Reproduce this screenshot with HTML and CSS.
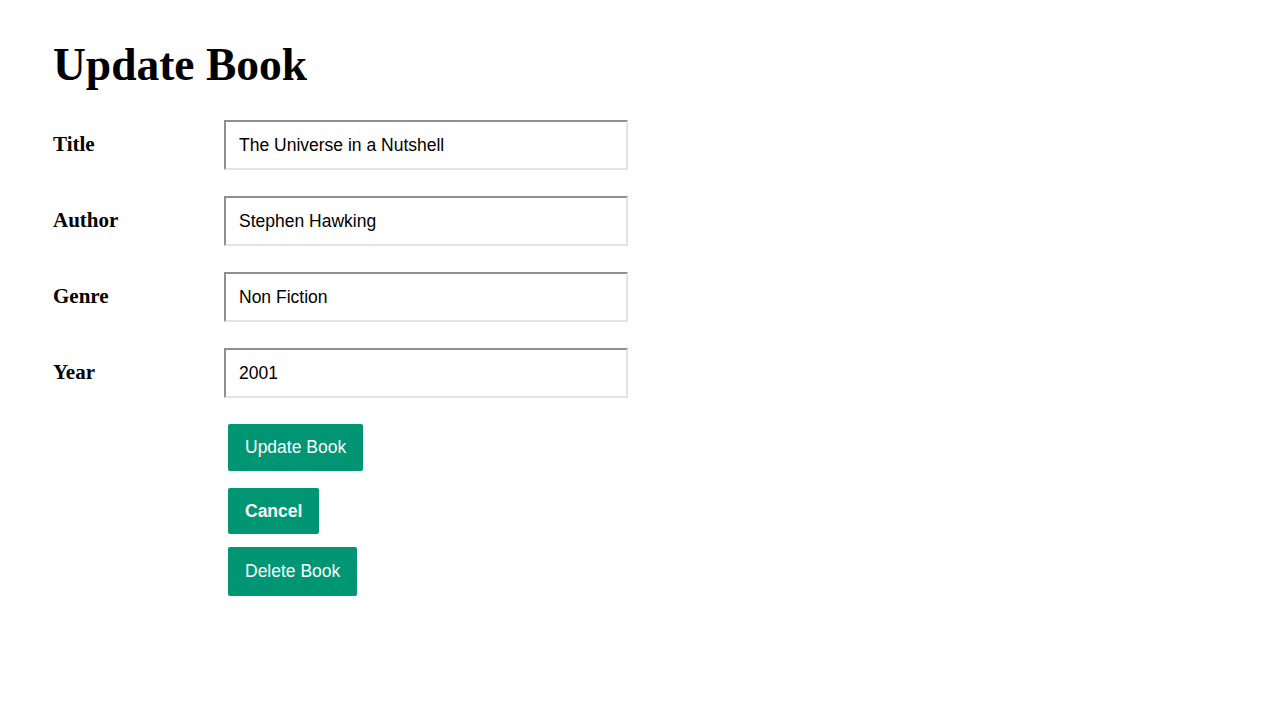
FILE: index.html
```html
<!DOCTYPE html>
<html>
<head>
<meta charset="utf-8">
<link rel="stylesheet" href="styles.css">
</head>
<body>
<main class="page">
  <h1 class="title">Update Book</h1>
  <form class="form">
    <div class="row">
      <label class="label">Title</label>
      <input class="field" type="text" value="The Universe in a Nutshell">
    </div>
    <div class="row">
      <label class="label">Author</label>
      <input class="field" type="text" value="Stephen Hawking">
    </div>
    <div class="row">
      <label class="label">Genre</label>
      <input class="field" type="text" value="Non Fiction">
    </div>
    <div class="row">
      <label class="label">Year</label>
      <input class="field" type="text" value="2001">
    </div>
    <div class="actions">
      <button type="button" class="btn btn-update">Update Book</button>
      <button type="button" class="btn btn-cancel">Cancel</button>
      <button type="button" class="btn btn-delete">Delete Book</button>
    </div>
  </form>
</main>
</body>
</html>
```
FILE: styles.css
```css
html, body {
  margin: 0;
  padding: 0;
  background: #ffffff;
}
.page {
  padding: 36px 53px;
  font-family: "Liberation Serif", "Times New Roman", serif;
  color: #000;
}
.title {
  margin: 0 0 26px 0;
  font-size: 45.5px;
  line-height: 58px;
  font-weight: bold;
}
.form {
  display: flex;
  flex-direction: column;
}
.row {
  display: flex;
  align-items: center;
  margin-bottom: 26px;
}
.label {
  width: 171px;
  font-size: 21px;
  font-weight: bold;
  margin-top: -2px;
}
.field {
  box-sizing: border-box;
  width: 404px;
  height: 50px;
  margin: 0;
  padding: 0 13px;
  border-style: solid;
  border-width: 2px;
  border-top-color: #8f8f8f;
  border-left-color: #8f8f8f;
  border-right-color: #e3e3e3;
  border-bottom-color: #e3e3e3;
  font-family: "Liberation Sans", Arial, sans-serif;
  font-size: 17.5px;
  color: #000;
  background: #fff;
  outline: none;
}
.actions {
  display: flex;
  flex-direction: column;
  align-items: flex-start;
  padding-left: 175px;
}
.btn {
  box-sizing: border-box;
  background: #009674;
  color: #fff;
  border: none;
  border-radius: 2px;
  padding: 0 17px;
  font-family: "Liberation Sans", Arial, sans-serif;
  font-size: 17.5px;
  cursor: pointer;
}
.btn-update {
  height: 47px;
  margin-bottom: 17px;
}
.btn-cancel {
  height: 46px;
  font-weight: bold;
  margin-bottom: 13px;
}
.btn-delete {
  height: 49px;
}
```
